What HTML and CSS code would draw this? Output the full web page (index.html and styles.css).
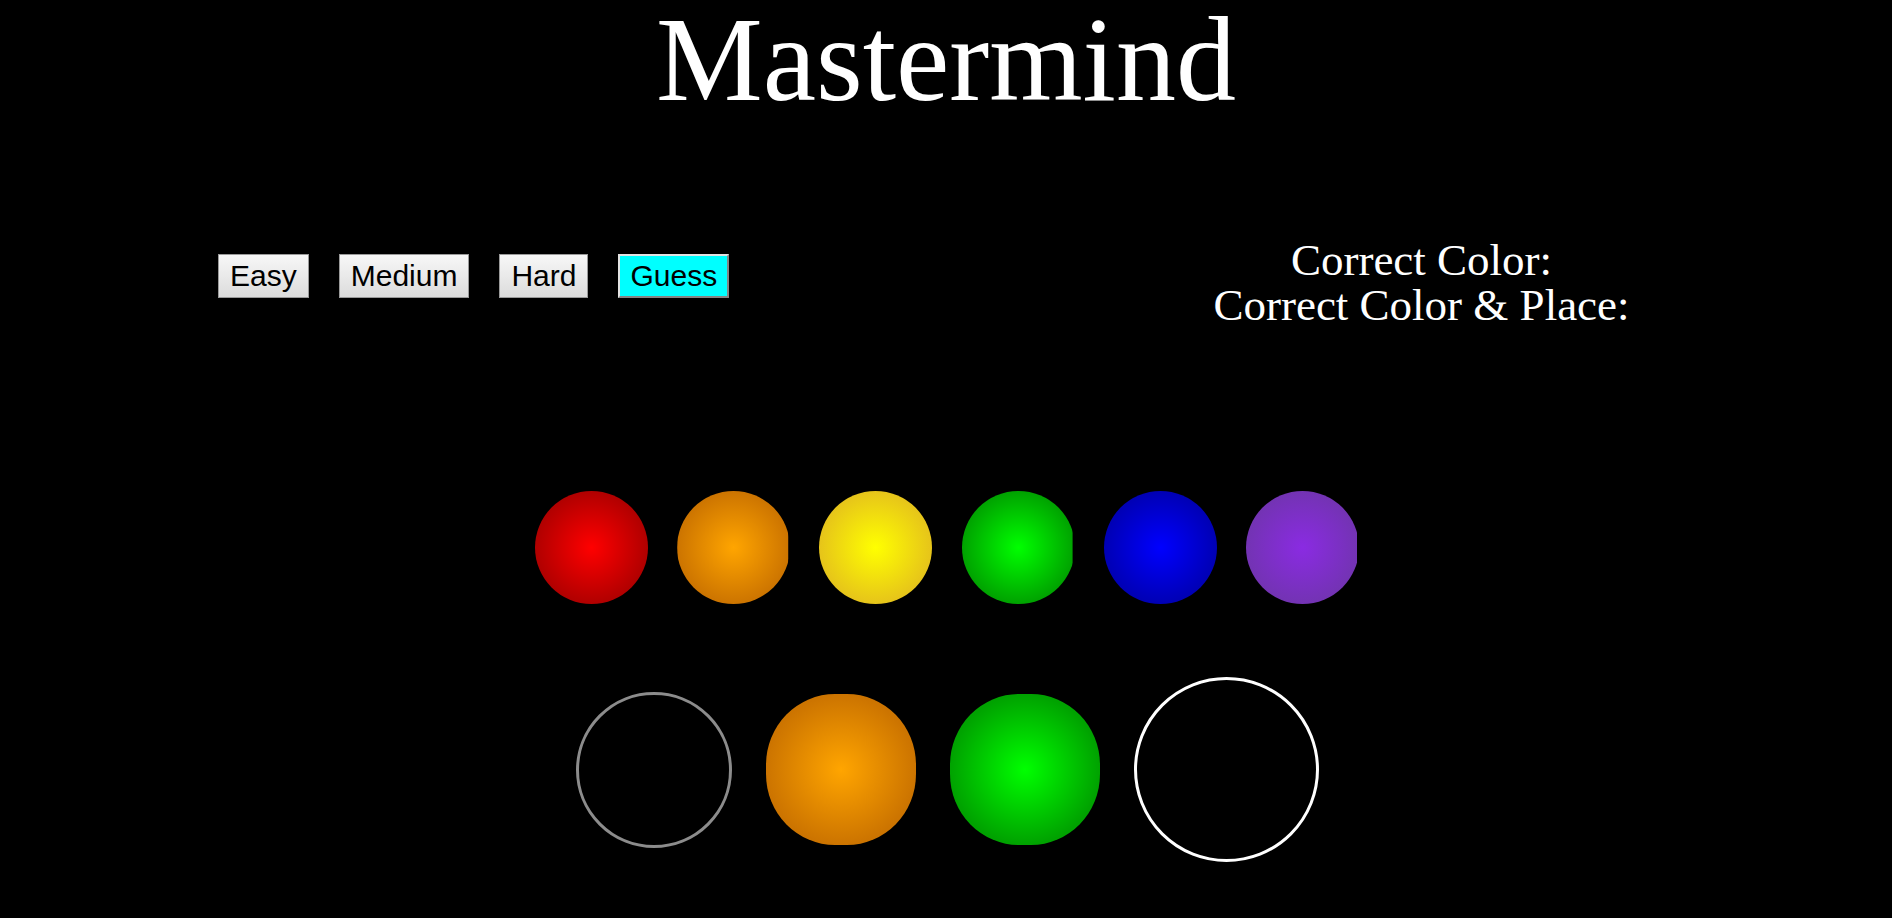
FILE: index.html
```html
<!DOCTYPE html>
<html lang="en">
<head>
<meta charset="utf-8">
<title>Mastermind</title>
<link rel="stylesheet" href="styles.css">
</head>
<body>
  <h1 class="title">Mastermind</h1>
  <div class="controls">
    <div class="levels">
      <button class="btn">Easy</button>
      <button class="btn">Medium</button>
      <button class="btn">Hard</button>
      <button class="btn guess">Guess</button>
    </div>
    <div class="score">
      <div class="score-line">Correct Color:</div>
      <div class="score-line">Correct Color &amp; Place:</div>
    </div>
  </div>
  <div class="palette">
    <div class="peg red"></div>
    <div class="peg orange clip"></div>
    <div class="peg yellow"></div>
    <div class="peg green clip"></div>
    <div class="peg blue"></div>
    <div class="peg purple clip"></div>
  </div>
  <div class="board">
    <div class="hole empty"></div>
    <div class="hole filled orange"></div>
    <div class="hole filled green"></div>
    <div class="hole selected"></div>
  </div>
</body>
</html>
```
FILE: styles.css
```css
html, body {
  margin: 0;
  padding: 0;
  background: #000;
}

body {
  width: 1892px;
  height: 918px;
  overflow: hidden;
  color: #fff;
  font-family: "Liberation Serif", "Times New Roman", serif;
}

.title {
  margin: 0;
  font-size: 120px;
  line-height: 120px;
  font-weight: normal;
  text-align: center;
}

.controls {
  display: flex;
  margin-top: 118px;
}

.levels {
  width: 946px;
  box-sizing: border-box;
  padding-left: 218px;
  padding-top: 16px;
  display: flex;
  align-items: flex-start;
  gap: 30px;
}

.btn {
  font-family: "Liberation Sans", Arial, sans-serif;
  font-size: 30px;
  line-height: 36px;
  color: #000;
  margin: 0;
  padding: 3px 11px;
  border: 1px solid #9a9a9a;
  border-radius: 0;
  background: linear-gradient(#f7f7f7, #dcdcdc);
}

.btn.guess {
  background: #00ffff;
  padding: 2px 10px;
  border: 2px solid;
  border-color: #e3e3e3 #858585 #858585 #e3e3e3;
}

.score {
  width: 946px;
  box-sizing: border-box;
  padding-left: 5px;
  text-align: center;
  font-size: 45px;
  line-height: 45px;
}

.palette {
  display: flex;
  justify-content: center;
  gap: 29.2px;
  margin-top: 163px;
  padding-left: 2px;
}

.peg {
  width: 113px;
  height: 113px;
  border-radius: 50%;
}

.clip {
  clip-path: inset(0 2px 0 0);
}

.red { background: radial-gradient(circle closest-side, #ff0000, #b00000); }
.orange { background: radial-gradient(circle closest-side, #ffa500, #cc7400); }
.yellow { background: radial-gradient(circle closest-side, #ffff00, #e6c41a); }
.green { background: radial-gradient(circle closest-side, #00ff00, #00a200); }
.blue { background: radial-gradient(circle closest-side, #0000ff, #0000b4); }
.purple { background: radial-gradient(circle closest-side, #8a2be2, #7333b3); }

.board {
  display: flex;
  justify-content: center;
  align-items: center;
  gap: 34px;
  margin-top: 73px;
  padding-left: 2px;
}

.hole {
  box-sizing: border-box;
}

.hole.empty {
  width: 156px;
  height: 156px;
  border: 3px solid #8c8c8c;
  border-radius: 50%;
}

.hole.filled {
  width: 150px;
  height: 151px;
  border-radius: 46% / 47%;
}

.hole.selected {
  width: 185px;
  height: 185px;
  border: 3px solid #fff;
  border-radius: 50%;
}
```
